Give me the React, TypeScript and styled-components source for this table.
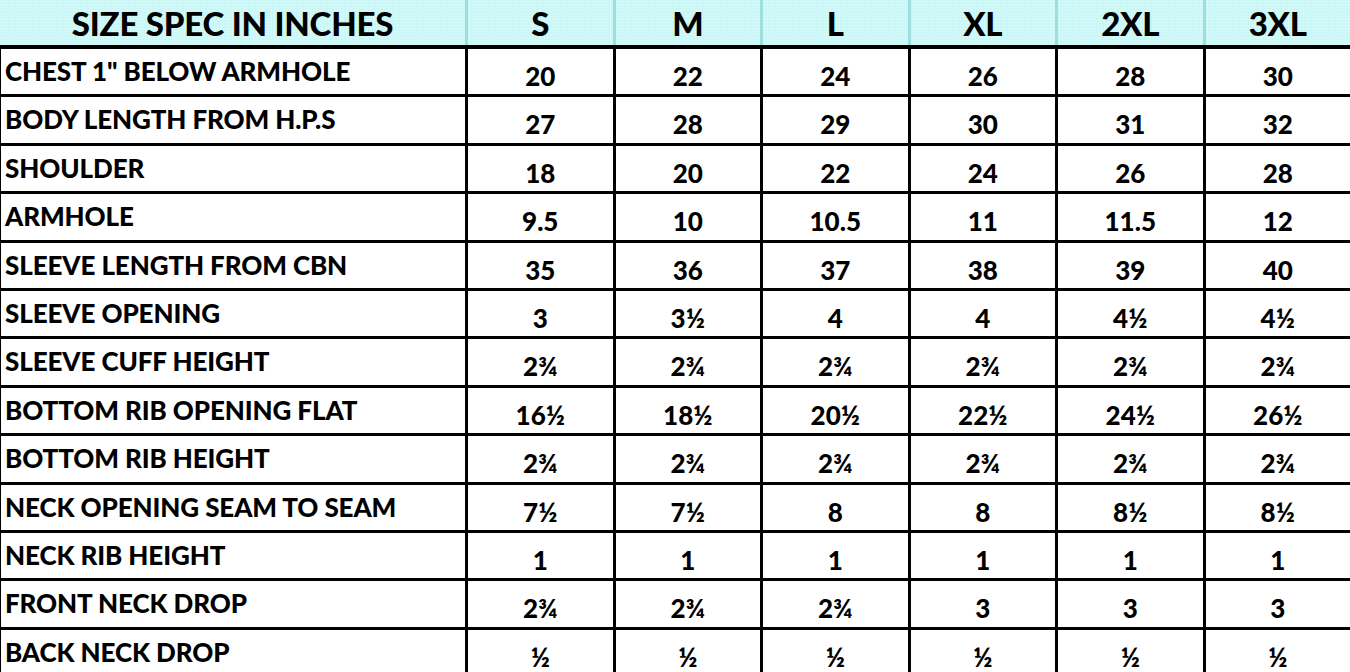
import React from "react";
import styled, { createGlobalStyle } from "styled-components";

const GlobalStyle = createGlobalStyle`
  html, body { margin: 0; padding: 0; background: #ffffff; }
  body { font-family: Lato, "Open Sans", "Liberation Sans", sans-serif; }
`;

const Table = styled.div`
  display: grid;
  width: 1350px;
  grid-template-columns: 465px repeat(6, 144.5px);
  column-gap: 3px;
  background: #000;
  color: #000;
  font-family: Lato, "Open Sans", "Liberation Sans", sans-serif;
  font-weight: 900;
`;

const HeaderCell = styled.div<{ $label?: boolean }>`
  height: 45px;
  margin-bottom: 4px;
  display: flex;
  align-items: center;
  justify-content: center;
  font-size: 33px;
  letter-spacing: -0.2px;
  background-color: #ccf7f7;
  background-image: radial-gradient(circle, #e6fdfd 0.7px, transparent 0.9px);
  background-size: 3px 3px;
  box-shadow: ${(p) => (p.$label ? "none" : "-3px 0 0 #9fdede")};
`;

const Label = styled.div`
  height: 45.4px;
  margin-bottom: 3px;
  background: #fff;
  display: flex;
  align-items: flex-start;
  padding: 6px 0 0 5px;
  box-sizing: border-box;
  font-size: 26px;
  letter-spacing: -0.1px;
  white-space: nowrap;
  box-shadow: inset 1px 0 0 #000;
`;

const Value = styled.div`
  height: 45.4px;
  margin-bottom: 3px;
  background: #fff;
  display: flex;
  align-items: flex-start;
  justify-content: center;
  padding-top: 11px;
  box-sizing: border-box;
  font-size: 26px;
`;

const sizes = ["S", "M", "L", "XL", "2XL", "3XL"];

const rows: [string, string[]][] = [
  ['CHEST 1" BELOW ARMHOLE', ["20", "22", "24", "26", "28", "30"]],
  ["BODY LENGTH FROM H.P.S", ["27", "28", "29", "30", "31", "32"]],
  ["SHOULDER", ["18", "20", "22", "24", "26", "28"]],
  ["ARMHOLE", ["9.5", "10", "10.5", "11", "11.5", "12"]],
  ["SLEEVE LENGTH FROM CBN", ["35", "36", "37", "38", "39", "40"]],
  ["SLEEVE OPENING", ["3", "3½", "4", "4", "4½", "4½"]],
  ["SLEEVE CUFF HEIGHT", ["2¾", "2¾", "2¾", "2¾", "2¾", "2¾"]],
  ["BOTTOM RIB OPENING FLAT", ["16½", "18½", "20½", "22½", "24½", "26½"]],
  ["BOTTOM RIB HEIGHT", ["2¾", "2¾", "2¾", "2¾", "2¾", "2¾"]],
  ["NECK OPENING SEAM TO SEAM", ["7½", "7½", "8", "8", "8½", "8½"]],
  ["NECK RIB HEIGHT", ["1", "1", "1", "1", "1", "1"]],
  ["FRONT NECK DROP", ["2¾", "2¾", "2¾", "3", "3", "3"]],
  ["BACK NECK DROP", ["½", "½", "½", "½", "½", "½"]],
];

export default function App() {
  return (
    <>
      <GlobalStyle />
      <Table>
        <HeaderCell $label>SIZE SPEC IN INCHES</HeaderCell>
        {sizes.map((s) => (
          <HeaderCell key={s}>{s}</HeaderCell>
        ))}
        {rows.map(([label, vals]) => (
          <React.Fragment key={label}>
            <Label>{label}</Label>
            {vals.map((v, i) => (
              <Value key={i}>{v}</Value>
            ))}
          </React.Fragment>
        ))}
      </Table>
    </>
  );
}
